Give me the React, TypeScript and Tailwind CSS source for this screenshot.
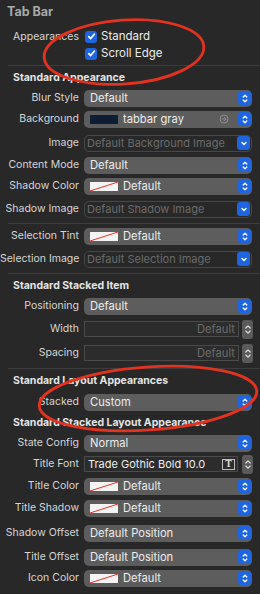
import React from "react";

type Swatch = "none" | "navy";

function Chevrons({ single = false }: { single?: boolean }) {
  return (
    <svg width="8" height="11" viewBox="0 0 8 11" fill="none">
      {single ? (
        <path d="M2 4.5 L4 6.5 L6 4.5" stroke="white" strokeWidth="1.4" strokeLinecap="round" strokeLinejoin="round" />
      ) : (
        <>
          <path d="M2.2 4 L4 2.2 L5.8 4" stroke="white" strokeWidth="1.3" strokeLinecap="round" strokeLinejoin="round" />
          <path d="M2.2 7 L4 8.8 L5.8 7" stroke="white" strokeWidth="1.3" strokeLinecap="round" strokeLinejoin="round" />
        </>
      )}
    </svg>
  );
}

function ColorSwatch({ kind }: { kind: Swatch }) {
  if (kind === "navy") {
    return <span className="block h-[9px] w-[28px] shrink-0 bg-[#0d1d36]" />;
  }
  return (
    <svg width="28" height="9" viewBox="0 0 28 9" className="shrink-0">
      <rect width="28" height="9" fill="#f4f4f4" />
      <line x1="0" y1="9" x2="28" y2="0" stroke="#e0352b" strokeWidth="1" />
    </svg>
  );
}

function Popup({
  value,
  swatch,
  disabled = false,
  trailing,
}: {
  value: string;
  swatch?: Swatch;
  disabled?: boolean;
  trailing?: React.ReactNode;
}) {
  return (
    <div
      className={
        disabled
          ? "flex h-[17px] w-[168px] items-center rounded-[5px] border border-[#474747] pl-[2px] pr-[1px]"
          : "flex h-[17px] w-[168px] items-center rounded-[5px] bg-[#5d5d5d] pl-[6px] pr-[1px]"
      }
    >
      {swatch ? <ColorSwatch kind={swatch} /> : null}
      <span
        className={
          disabled
            ? "flex-1 truncate text-[11px] text-[#6b6b6b]"
            : swatch
              ? "ml-[5px] flex-1 truncate text-[11.2px] text-[#ececec]"
              : "flex-1 truncate text-[11.2px] text-[#ececec]"
        }
      >
        {value}
      </span>
      {trailing}
      <span className="flex h-[14px] w-[13px] items-center justify-center rounded-[3px] bg-[#1f65df]">
        <Chevrons single={disabled} />
      </span>
    </div>
  );
}

function Stepper() {
  return (
    <span className="flex h-[19px] w-[11px] items-center justify-center rounded-[3px] bg-[#5a5a5a]">
      <svg width="8" height="13" viewBox="0 0 8 13" fill="none">
        <path d="M1.8 5 L4 2.8 L6.2 5" stroke="#dcdcdc" strokeWidth="1.2" strokeLinecap="round" strokeLinejoin="round" />
        <path d="M1.8 8 L4 10.2 L6.2 8" stroke="#dcdcdc" strokeWidth="1.2" strokeLinecap="round" strokeLinejoin="round" />
      </svg>
    </span>
  );
}

function NumberField({ placeholder }: { placeholder: string }) {
  return (
    <div className="flex items-center gap-[3px]">
      <div className="flex h-[16px] w-[155px] items-center justify-end border border-[#4a4a4a] bg-[#2c2c2c] pr-[3px] text-[11.2px] text-[#6b6b6b]">
        {placeholder}
      </div>
      <Stepper />
    </div>
  );
}

function FontField({ value }: { value: string }) {
  return (
    <div className="flex items-center gap-[4px]">
      <div className="flex h-[16px] w-[154px] items-center border border-[#4a4a4a] bg-[#2c2c2c] pl-[3px] pr-[2px] text-[11px] text-[#ececec]">
        <span className="flex-1 truncate">{value}</span>
        <span className="flex h-[11px] w-[13px] items-center justify-center border border-[#bdbdbd] font-['Liberation_Serif',serif] text-[10px] font-bold leading-none text-[#dcdcdc]">
          T
        </span>
      </div>
      <Stepper />
    </div>
  );
}

function Row({ label, className, children }: { label: string; className: string; children: React.ReactNode }) {
  return (
    <div className={["flex h-[20px] items-center gap-[5px]", className].join(" ")}>
      <span className="w-[79px] shrink-0 whitespace-nowrap text-right text-[10.5px] text-[#d6d6d6]">{label}</span>
      {children}
    </div>
  );
}

function Header({ title, className }: { title: string; className: string }) {
  return (
    <div className={["flex h-[20px] items-center pl-[13px] text-[10.5px] font-bold text-[#e4e4e4]", className].join(" ")}>
      {title}
    </div>
  );
}

function Separator({ className }: { className: string }) {
  return <div className={["ml-[8px] h-px bg-[#3d3d3d]", className].join(" ")} />;
}

function Check({ label }: { label: string }) {
  return (
    <span className="flex items-center gap-[4px]">
      <span className="flex h-[12px] w-[12px] items-center justify-center rounded-[3px] bg-[#1f65df]">
        <svg width="9" height="9" viewBox="0 0 9 9" fill="none">
          <path d="M1.8 4.6 L3.7 6.6 L7.3 2.2" stroke="white" strokeWidth="1.6" strokeLinecap="round" strokeLinejoin="round" />
        </svg>
      </span>
      <span className="text-[11.5px] text-[#ececec]">{label}</span>
    </span>
  );
}

function ArrowCircle() {
  return (
    <svg width="10" height="10" viewBox="0 0 10 10" fill="none" className="mr-[9px]">
      <circle cx="5" cy="5" r="4" stroke="#8c8c8c" strokeWidth="1" />
      <path d="M3 5 H7 M5.4 3.4 L7 5 L5.4 6.6" stroke="#8c8c8c" strokeWidth="0.9" strokeLinecap="round" strokeLinejoin="round" />
    </svg>
  );
}

export default function App() {
  return (
    <div className="relative min-h-[594px] w-[260px] overflow-hidden bg-[#282828] font-['Inter',sans-serif]">
      <div className="mt-[2px] flex h-[20px] items-center pl-[7px] text-[12.5px] font-bold text-[#a9a9a9]">Tab Bar</div>

      <div className="mt-[6px] flex h-[17px] items-center gap-[6px]">
        <span className="w-[79px] shrink-0 text-right text-[10.5px] text-[#d6d6d6]">Appearances</span>
        <Check label="Standard" />
      </div>
      <div className="flex h-[17px] items-center pl-[85px]">
        <Check label="Scroll Edge" />
      </div>

      <Separator className="mt-[3px]" />
      <Header title="Standard Appearance" className="mt-[2px]" />
      <Row label="Blur Style" className="mt-0">
        <Popup value="Default" />
      </Row>
      <Row label="Background" className="mt-[1px]">
        <Popup value="tabbar gray" swatch="navy" trailing={<ArrowCircle />} />
      </Row>
      <Row label="Image" className="mt-[4px]">
        <Popup value="Default Background Image" disabled />
      </Row>
      <Row label="Content Mode" className="mt-[2px]">
        <Popup value="Default" />
      </Row>
      <Row label="Shadow Color" className="mt-[1px]">
        <Popup value="Default" swatch="none" />
      </Row>
      <Row label="Shadow Image" className="mt-[3px]">
        <Popup value="Default Shadow Image" disabled />
      </Row>

      <Separator className="mt-[4px]" />
      <Row label="Selection Tint" className="mt-[2px]">
        <Popup value="Default" swatch="none" />
      </Row>
      <Row label="Selection Image" className="mt-[3px]">
        <Popup value="Default Selection Image" disabled />
      </Row>

      <Separator className="mt-[4px]" />
      <Header title="Standard Stacked Item" className="mt-[2px]" />
      <Row label="Positioning" className="mt-0">
        <Popup value="Default" />
      </Row>
      <Row label="Width" className="mt-[3px]">
        <NumberField placeholder="Default" />
      </Row>
      <Row label="Spacing" className="mt-[4px]">
        <NumberField placeholder="Default" />
      </Row>

      <Separator className="mt-[5px]" />
      <Header title="Standard Layout Appearances" className="mt-[2px]" />
      <Row label="Stacked" className="mt-[1px]">
        <Popup value="Custom" />
      </Row>
      <Header title="Standard Stacked Layout Appearance" className="mt-[1px]" />
      <Row label="State Config" className="mt-0">
        <Popup value="Normal" />
      </Row>
      <Row label="Title Font" className="mt-[1px]">
        <FontField value="Trade Gothic Bold 10.0" />
      </Row>
      <Row label="Title Color" className="mt-[2px]">
        <Popup value="Default" swatch="none" />
      </Row>
      <Row label="Title Shadow" className="mt-[2px]">
        <Popup value="Default" swatch="none" />
      </Row>
      <Row label="Shadow Offset" className="mt-[5px]">
        <Popup value="Default Position" />
      </Row>
      <Row label="Title Offset" className="mt-[4px]">
        <Popup value="Default Position" />
      </Row>
      <Row label="Icon Color" className="mt-[1px]">
        <Popup value="Default" swatch="none" />
      </Row>

      <svg
        className="pointer-events-none absolute left-0 top-0"
        width="260"
        height="594"
        viewBox="0 0 260 594"
        fill="none"
      >
        <ellipse cx="124" cy="52" rx="80" ry="32" transform="rotate(-4 124 52)" stroke="#e3321f" strokeWidth="2.8" />
        <ellipse cx="148" cy="398.5" rx="109" ry="31.5" transform="rotate(-4 148 398.5)" stroke="#e3321f" strokeWidth="2.8" />
      </svg>
    </div>
  );
}
